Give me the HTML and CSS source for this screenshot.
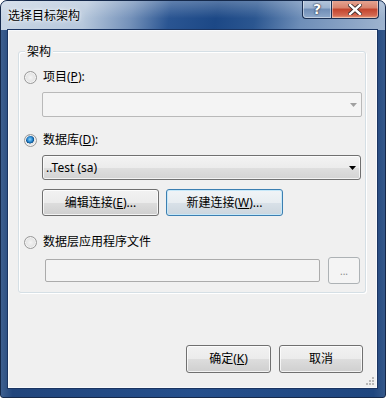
FILE: index.html
```html
<!DOCTYPE html>
<html lang="zh-CN">
<head>
<meta charset="utf-8">
<title>选择目标架构</title>
<link rel="stylesheet" href="styles.css">
</head>
<body>
<div class="window">
  <div class="titlebar">
    <span class="title">选择目标架构</span>
    <div class="caption-btns">
      <div class="cbtn help">?</div>
      <div class="cbtn close">
        <svg width="14" height="11" viewBox="0 0 14 11">
          <path d="M2 1 L12 10 M12 1 L2 10" stroke="#3a2a2a" stroke-width="4.2" stroke-linecap="square" fill="none"/>
          <path d="M2 1 L12 10 M12 1 L2 10" stroke="#ffffff" stroke-width="2.4" stroke-linecap="square" fill="none"/>
        </svg>
      </div>
    </div>
  </div>
  <div class="client">
    <div class="group">
      <div class="group-title">架构</div>
      <div class="radio-row first"><span class="radio"></span><span>项目(<u>P</u>):</span></div>
      <div class="combo disabled">
        <svg class="arrow" width="7" height="4" viewBox="0 0 7 4"><path d="M0 0 H7 L3.5 4 Z" fill="#a0a0a0"/></svg>
      </div>
      <div class="radio-row second"><span class="radio checked"></span><span>数据库(<u>D</u>):</span></div>
      <div class="combo dropdown">
        <span class="combo-text">..Test (sa)</span>
        <svg class="arrow" width="7" height="4" viewBox="0 0 7 4"><path d="M0 0 H7 L3.5 4 Z" fill="#000"/></svg>
      </div>
      <div class="btn-row">
        <button class="btn conn">编辑连接(<u>E</u>)...</button>
        <button class="btn conn focused">新建连接(<u>W</u>)...</button>
      </div>
      <div class="radio-row third"><span class="radio"></span><span>数据层应用程序文件</span></div>
      <div class="file-row">
        <div class="textbox"></div>
        <button class="btn browse">...</button>
      </div>
    </div>
    <div class="footer">
      <button class="btn ok">确定(<u>K</u>)</button>
      <button class="btn cancel">取消</button>
    </div>
    <svg class="grip" width="10" height="10" viewBox="0 0 10 10">
      <g fill="#b8b8b8">
        <rect x="7" y="1" width="2" height="2"/>
        <rect x="4" y="4" width="2" height="2"/><rect x="7" y="4" width="2" height="2"/>
        <rect x="1" y="7" width="2" height="2"/><rect x="4" y="7" width="2" height="2"/><rect x="7" y="7" width="2" height="2"/>
      </g>
    </svg>
  </div>
</div>
</body>
</html>
```

FILE: styles.css
```css
* { box-sizing: border-box; }
html, body { margin: 0; padding: 0; background: #ffffff; }
body {
  width: 386px; height: 398px; overflow: hidden;
  font: 12px/16px "Noto Sans", "Noto Sans CJK SC", sans-serif;
  color: #000;
}
.window {
  width: 386px; height: 398px;
  border: 1px solid #15294b;
  border-radius: 7px 7px 3px 3px;
  background: linear-gradient(to right, #3d5f8f 0%, #21457c 3%, #254f8c 50%, #1f467f 97%, #35588a 100%);
  display: flex; flex-direction: column;
  overflow: hidden;
}
.titlebar {
  height: 29px; flex: none;
  display: flex; align-items: flex-start;
  background:
    linear-gradient(to bottom, rgba(255,255,255,0.25) 0%, rgba(255,255,255,0) 60%),
    linear-gradient(100deg, #c9d6e5 0%, #b7c8dc 22%, #7592ba 34%, #2a5592 44%, #1c4886 56%, #2b5690 66%, #6e8eb8 78%, #9fb4cf 100%);
}
.title {
  margin: 6px 0 0 7px;
  font: 12px/16px "Noto Sans CJK SC", sans-serif;
  color: #000;
  text-shadow: 0 0 6px #fff, 0 0 3px #fff;
}
.caption-btns { margin-left: auto; margin-right: 6px; display: flex; margin-top: -1px; }
.cbtn {
  height: 19px;
  border: 1px solid #1b2f52;
  border-top: none;
  display: flex; align-items: center; justify-content: center;
}
.help {
  width: 29px;
  border-radius: 0 0 0 4px;
  border-right: none;
  background: linear-gradient(to bottom, #b7c7dc 0%, #9cb2cf 45%, #6f8db6 50%, #8fa9cb 100%);
  box-shadow: inset 0 0 0 1px rgba(255,255,255,0.45);
  color: #fff;
  font: bold 14px/16px "DejaVu Sans", sans-serif;
  text-shadow: 0 0 2px #223, 0 0 1px #223;
}
.close {
  width: 48px;
  border-radius: 0 0 4px 0;
  background: linear-gradient(to bottom, #e7a896 0%, #d8826c 45%, #c2432c 50%, #d36750 85%, #e6a07f 100%);
  box-shadow: inset 0 0 0 1px rgba(255,255,255,0.4);
}
.client {
  flex: 1;
  margin: 0 8px 9px 7px;
  border: 1px solid #f7f9fc;
  box-shadow: 0 0 0 1px #1a3461;
  background: #f0f0f0;
  display: flex; flex-direction: column;
  position: relative;
}
.group {
  margin: 20px 10px 0 9px;
  border: 1px solid #d5dfe5;
  border-radius: 3px;
  box-shadow: inset 1px 1px 0 #ffffff, 1px 1px 0 #ffffff;
  display: flex; flex-direction: column;
  padding: 0 0 8px 0;
}
.group-title {
  margin: -9px 0 0 6px;
  padding: 0 2px;
  align-self: flex-start;
  background: #f0f0f0;
  font-family: "Noto Sans CJK SC", sans-serif;
}
.radio-row { display: flex; align-items: center; height: 16px; }
.radio-row.first { margin-top: 10px; }
.radio-row.second { margin-top: 15px; }
.radio-row.third { margin-top: 18px; }
.radio {
  width: 13px; height: 13px; flex: none;
  margin: 0 6px 0 5px;
  border-radius: 50%;
  border: 1px solid #989898;
  background: radial-gradient(circle at 50% 50%, #f4f4f4 0%, #e2e2e2 60%, #cfcfcf 100%);
  box-shadow: inset 0 0 0 1px #f4f4f4;
}
.radio.checked {
  background:
    radial-gradient(circle at 45% 40%, #8fd3f7 0%, #2a8ad4 28%, #0b4d86 44%, rgba(0,0,0,0) 48%),
    radial-gradient(circle, #f4f4f4 0%, #e2e2e2 60%, #cfcfcf 100%);
}
u { text-decoration: underline; text-underline-offset: 1px; }
.combo {
  margin: 7px 0 0 23px;
  width: 320px; height: 25px;
  border-radius: 3px;
  display: flex; align-items: center;
  position: relative;
}
.combo .arrow { margin-left: auto; margin-right: 4px; }
.combo.disabled {
  border: 1px solid #b9b9b9;
  background: #f4f4f4;
  border-radius: 2px;
}
.combo.dropdown {
  margin-top: 7px;
  width: 319px;
  border: 1px solid #707070;
  background: linear-gradient(to bottom, #f3f3f3 0%, #ececec 50%, #dfdfdf 51%, #d3d3d3 100%);
  box-shadow: inset 0 0 0 1px rgba(255,255,255,0.7);
}
.combo-text { padding-left: 3px; font-family: "Noto Sans", sans-serif; }
.btn {
  height: 27px;
  border: 1px solid #707070;
  border-radius: 3px;
  background: linear-gradient(to bottom, #f2f2f2 0%, #ebebeb 50%, #dddddd 51%, #cfcfcf 100%);
  box-shadow: inset 0 0 0 1px rgba(255,255,255,0.75);
  font: 12px/16px "Noto Sans", "Noto Sans CJK SC", sans-serif;
  color: #000;
  padding: 0;
  display: flex; align-items: center; justify-content: center;
}
.btn-row { margin: 9px 0 0 23px; display: flex; gap: 7px; }
.btn.conn { width: 117px; }
.btn.focused {
  border-color: #3c7fb1;
  box-shadow: inset 0 0 0 1px #c6e8f9;
  background: linear-gradient(to bottom, #f0f4f7 0%, #e8edf1 50%, #d9e1e8 51%, #ccd6de 100%);
}
.file-row { margin: 7px 0 0 26px; display: flex; align-items: center; height: 27px; }
.textbox {
  width: 275px; height: 23px;
  border: 1px solid #ababab;
  border-radius: 2px;
  background: #f3f3f3;
}
.btn.browse {
  width: 32px; margin-left: 8px;
  border-color: #adb2b5;
  background: #f4f4f4;
  box-shadow: none;
  color: #8a8a8a;
  font-size: 10px;
}
.footer {
  margin: auto 13px 14px 0;
  display: flex; justify-content: flex-end; gap: 8px;
}
.btn.ok { width: 85px; height: 28px; }
.btn.cancel { width: 84px; height: 28px; }
.grip { position: absolute; right: 1px; bottom: 1px; }
```
